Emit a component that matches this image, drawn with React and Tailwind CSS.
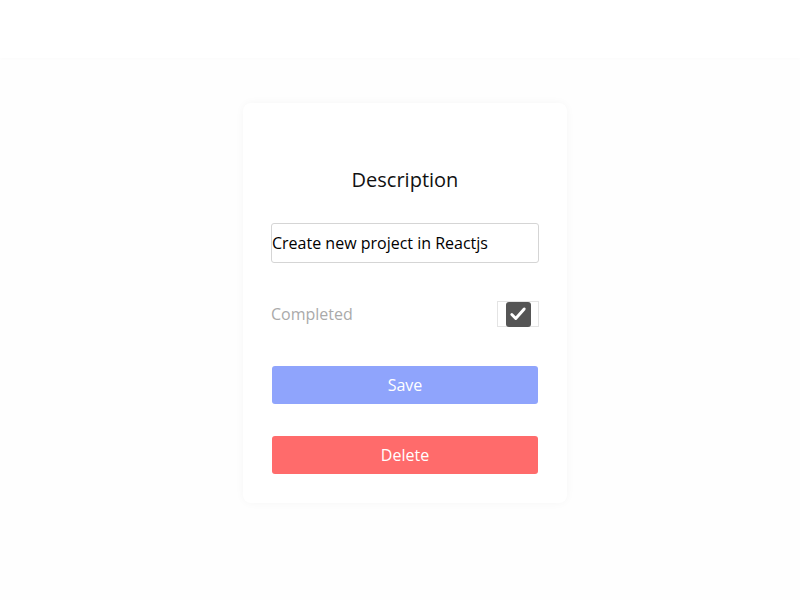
import { useState } from 'react';

const CheckIcon = () => (
  <svg className="w-[18px] h-[18px]" viewBox="0 0 16 16" fill="none">
    <path d="M2.5 8.5l3.5 3.5 7.5-8.5" stroke="white" strokeWidth={2.6} strokeLinecap="round" strokeLinejoin="round" />
  </svg>
);

const App = () => {
  const [title, setTitle] = useState('Create new project in Reactjs');
  const [completed, setCompleted] = useState(true);

  return (
    <div className="min-h-[600px] bg-[#fefefe] font-['Open_Sans',sans-serif]">
      {/* Header strip */}
      <div className="h-[58px] bg-white shadow-[0_1px_4px_rgba(0,0,0,0.015)]" />

      <div className="flex justify-center pt-[45px] pl-[10px]">
        <div className="w-[324px] bg-white rounded-lg shadow-[0_0_10px_rgba(0,0,0,0.035)] px-[28px] pt-[63px] pb-[29px] flex flex-col">
          <h2 className="text-center text-[20px] leading-[28px] text-[#111]">Description</h2>

          <input
            value={title}
            onChange={(e) => setTitle(e.target.value)}
            className="mt-[29px] h-[40px] w-full border border-[#d5d5d5] rounded-[3px] px-0 text-[16px] text-black outline-none"
          />

          <div className="mt-[38px] flex items-center justify-between">
            <span className="text-[16px] text-[#aaaaaa]">Completed</span>
            <button
              type="button"
              onClick={() => setCompleted((c) => !c)}
              className="w-[42px] h-[26px] border border-[#e4e4e4] flex items-center justify-center bg-white"
            >
              <span className={`w-[25px] h-[25px] rounded-[3px] flex items-center justify-center ${completed ? 'bg-[#555555]' : 'bg-white border border-[#777]'}`}>
                {completed && <CheckIcon />}
              </span>
            </button>
          </div>

          <button type="button" className="mt-[39px] mx-[1px] h-[38px] rounded-[3px] bg-[#8fa4fc] text-white text-[16px]">
            Save
          </button>

          <button type="button" className="mt-[32px] mx-[1px] h-[38px] rounded-[3px] bg-[#ff6b6b] text-white text-[16px]">
            Delete
          </button>
        </div>
      </div>
    </div>
  );
};

export default App;
